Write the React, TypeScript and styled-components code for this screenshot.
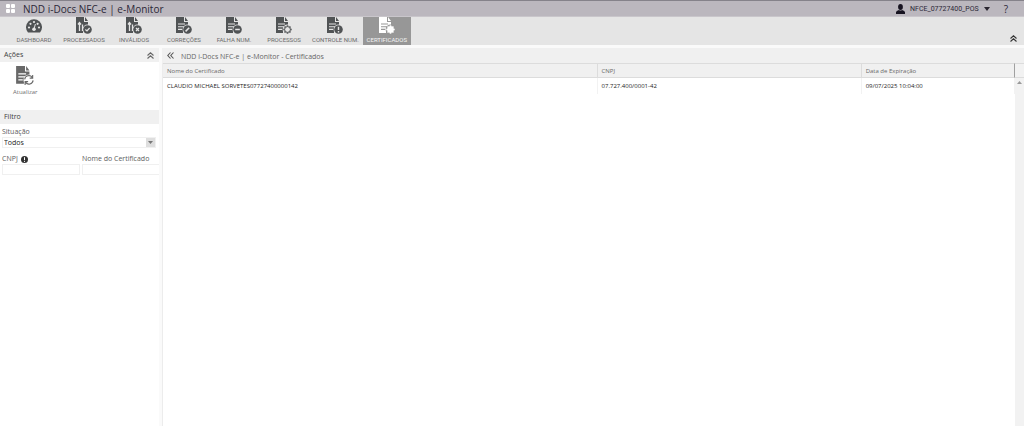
import React from "react";
import styled, { createGlobalStyle } from "styled-components";

const GlobalStyle = createGlobalStyle`
  * { box-sizing: border-box; }
  html, body, #root { height: 100%; }
  body { margin: 0; overflow: hidden; background: #fff; color: #3c3c3c; font: 7px/10px "Open Sans", "Noto Sans", sans-serif; }
  button, input, select { font: inherit; color: inherit; border-radius: 0; }
  button { border: 0; padding: 0; background: none; display: block; }
  svg { display: block; }
`;

const Page = styled.div`
  min-height: 100%;
  display: flex;
  flex-direction: column;
`;

const TopBar = styled.header`
  height: 17px;
  display: flex;
  align-items: center;
  padding: 0 16px 0 6px;
  background: #bbb7be;
  border-top: 1px solid #85828a;
  border-bottom: 1px solid #c9c6cb;
  color: #2c2838;
`;

const Title = styled.h1`
  margin: 0 auto 0 8px;
  font-size: 10px;
  line-height: 14px;
  font-weight: 400;
`;

const UserMenu = styled.button`
  display: flex;
  align-items: center;
  gap: 5px;
  margin-right: 14px;
  font-family: Roboto, "Open Sans", sans-serif;
`;

const Help = styled.button`
  font-size: 10px;
  line-height: 12px;
`;

const Ribbon = styled.nav`
  height: 28px;
  display: flex;
  gap: 2px;
  padding: 0 7px 0 10px;
  background: #e5e5e5;
`;

const NavItem = styled.button<{ $active?: boolean }>`
  min-width: 48px;
  padding: 0 2px;
  display: flex;
  flex-direction: column;
  align-items: center;
  font-family: Roboto, "Open Sans", sans-serif;
  font-size: 6px;
  line-height: 10px;
  color: ${(p) => (p.$active ? "#f4f4f4" : "#6c6c6c")};
  background: ${(p) => (p.$active ? "#979797" : "transparent")};
`;

const NavLabel = styled.span`
  white-space: nowrap;
`;

const Collapse = styled.button`
  margin: auto 0 3px auto;
`;

const Body = styled.main`
  flex: 1;
  display: flex;
  gap: 3px;
  padding-top: 3px;
  background: #fafafa;
`;

const Sidebar = styled.aside`
  width: 159px;
  flex: none;
  overflow: hidden;
  background: #fff;
`;

const PanelHeader = styled.div`
  height: 14px;
  display: flex;
  align-items: center;
  justify-content: space-between;
  padding: 0 5px 0 4px;
  background: #f0f0f0;
`;

const PanelTitle = styled.h2`
  margin: 0;
  font-size: 7px;
  line-height: 10px;
  font-weight: 400;
`;

const Actions = styled.div`
  height: 48px;
  padding: 4px 0 0 13px;
  color: #707070;
`;

const ActionButton = styled.button`
  display: flex;
  flex-direction: column;
  align-items: center;
  gap: 1px;
  font-size: 6px;
`;

const Filters = styled.form`
  padding: 3px 0 0 2px;
  color: #5c5c5c;
`;

const FieldRow = styled.div`
  display: flex;
  gap: 2px;
  margin-top: 6px;
`;

const Field = styled.div`
  flex: none;
  width: 78px;
`;

const Label = styled.label`
  display: flex;
  align-items: center;
  gap: 3px;
  height: 10px;
`;

const TextInput = styled.input`
  display: block;
  width: 100%;
  height: 11px;
  padding: 0 2px;
  border: 1px solid #f0f0f0;
  background: #fff;
`;

const SelectBox = styled.div`
  display: grid;
  grid-template-columns: 1fr 9px;
  align-items: center;
  height: 11px;
  margin-right: 3px;
  border: 1px solid #f0f0f0;
`;

const Select = styled.select`
  grid-area: 1 / 1 / 2 / 3;
  appearance: none;
  border: 0;
  height: 9px;
  padding: 0 10px 0 1px;
  line-height: 9px;
  background: transparent;
  color: #222;
`;

const SelectArrow = styled.span`
  grid-area: 1 / 2;
  height: 9px;
  display: grid;
  place-items: center;
  background: #dedede;
  pointer-events: none;
`;

const Content = styled.section`
  flex: 1;
  min-width: 0;
  display: flex;
  flex-direction: column;
  background: #fff;
`;

const ContentHeader = styled.div`
  height: 15px;
  display: flex;
  align-items: center;
  gap: 7px;
  padding: 0 5px;
  background: #f0f0f0;
  color: #666;
`;

const ContentTitle = styled(PanelTitle)`
  padding-top: 3px;
`;

const GridArea = styled.div`
  flex: 1;
  display: flex;
  border-left: 1px solid #ececec;
`;

const TableWrap = styled.div`
  flex: 1;
`;

const Table = styled.table`
  width: 100%;
  table-layout: fixed;
  border-collapse: separate;
  border-spacing: 0;
`;

const HeadCell = styled.th<{ $width: string }>`
  width: ${(p) => p.$width};
  height: 15px;
  padding: 0 4px;
  text-align: left;
  font-size: 6px;
  font-weight: 400;
  color: #686868;
  background: #f0f0f0;
  border: solid #dcdcdc;
  border-width: 1px 1px 1px 0;
  &:last-child { border-right-color: #a0a0a0; }
`;

const Cell = styled.td`
  height: 16px;
  padding: 0 4px;
  font-size: 6px;
  color: #1c1c1c;
  border-right: 1px solid #f2f2f2;
`;

const ScrollTrack = styled.div`
  width: 9px;
  background: #f2f2f2;
`;

const ScrollHead = styled.div`
  height: 15px;
  margin-bottom: 3px;
  border: solid #dcdcdc;
  border-width: 1px 0;
`;

const ScrollUp = styled.button`
  margin: 0 auto;
`;

const DOC = "M0 0H8V5H12V10A5 5 0 0 0 7 16H0ZM9 0L12 4H9Z";

type BadgeKind = "check" | "cross" | "edit" | "minus" | "gear" | "alert" | "seal" | "sync";

function Gear({ fill, stroke }: { fill: string; stroke: string }) {
  return (
    <g>
      {[0, 45, 90, 135].map((a) => (
        <path key={a} d="M11.5 8.3V16.7" stroke={stroke} strokeWidth="1.6" transform={`rotate(${a} 11.5 12.5)`} />
      ))}
      <circle cx="11.5" cy="12.5" r="2.9" fill={fill} stroke={stroke} />
    </g>
  );
}

function DocIcon({ kind, color = "#505355", bg = "#e5e5e5", arrow = false, width = 16, height = 18 }: {
  kind: BadgeKind; color?: string; bg?: string; arrow?: boolean; width?: number; height?: number;
}) {
  const disc = kind === "check" || kind === "cross" || kind === "edit" || kind === "minus" || kind === "alert";
  return (
    <svg width={width} height={height} viewBox="0 0 16 18" fill="none" aria-hidden="true">
      <path d={DOC} fill={color} />
      {arrow ? (
        <path d="M2 7.5L3.5 5.5L5 7.5M3.5 6V14M6.5 7.5V14" stroke={bg} strokeWidth="1.3" />
      ) : (
        <path d="M2 7H9M2 9.7H8M2 12.4H6" stroke={bg} strokeWidth="1.1" />
      )}
      <circle cx="11.5" cy="12.5" r="4.9" fill={bg} />
      {disc && <circle cx="11.5" cy="12.5" r="4.3" fill={color} />}
      {kind === "check" && <path d="M9.4 12.5L11 14L13.6 11" stroke={bg} strokeWidth="1.2" />}
      {kind === "cross" && <path d="M10 11L13 14M13 11L10 14" stroke={bg} strokeWidth="1.2" />}
      {kind === "edit" && <path d="M9.6 14.4L13.2 10.8" stroke={bg} strokeWidth="1.5" />}
      {kind === "minus" && <path d="M9.2 12.5H13.8" stroke={bg} strokeWidth="1.5" />}
      {kind === "alert" && <path d="M11.5 9.8V13.1M11.5 14V15.4" stroke={bg} strokeWidth="1.4" />}
      {kind === "gear" && <Gear fill={bg} stroke={color} />}
      {kind === "seal" && <Gear fill={color} stroke={color} />}
      {kind === "sync" && (
        <path d="M7.7 12A3.8 3.8 0 0 1 14.5 10.2M14.9 8V10.9H12.2M15.3 13A3.8 3.8 0 0 1 8.5 14.8M8.1 17V14.1H10.8" stroke={color} />
      )}
    </svg>
  );
}

function GaugeIcon() {
  return (
    <svg width="16" height="18" viewBox="0 0 16 18" aria-hidden="true">
      <path d="M2 15.5A8 8 0 1 1 14 15.5Z" fill="#505355" />
      <g fill="#e5e5e5">
        <circle cx="3" cy="10.5" r="1.1" />
        <circle cx="4.5" cy="6.8" r="1.1" />
        <circle cx="8" cy="5" r="1.1" />
        <circle cx="11.6" cy="6.8" r="1.1" />
        <circle cx="13" cy="10.5" r="1.1" />
        <circle cx="8" cy="12.3" r="1.8" />
      </g>
      <path d="M8 12L9.4 7" stroke="#e5e5e5" />
    </svg>
  );
}

function Chevrons({ left = false, color = "#333" }: { left?: boolean; color?: string }) {
  return (
    <svg width="7" height="7" viewBox="0 0 7 7" fill="none" stroke={color} strokeWidth="1.1" aria-hidden="true">
      <path d={left ? "M3.5 .5L.8 3.5L3.5 6.5M6.5 .5L3.8 3.5L6.5 6.5" : "M.5 3.5L3.5 .8L6.5 3.5M.5 6.5L3.5 3.8L6.5 6.5"} />
    </svg>
  );
}

const navItems: { label: string; kind: BadgeKind; arrow?: boolean }[] = [
  { label: "PROCESSADOS", kind: "check", arrow: true },
  { label: "INVÁLIDOS", kind: "cross", arrow: true },
  { label: "CORREÇÕES", kind: "edit" },
  { label: "FALHA NUM.", kind: "minus" },
  { label: "PROCESSOS", kind: "gear" },
  { label: "CONTROLE NUM.", kind: "alert" },
];

export default function App() {
  return (
    <Page>
      <GlobalStyle />
      <TopBar>
        <svg width="9" height="9" viewBox="0 0 9 9" fill="#fff" aria-hidden="true">
          <rect width="4" height="4" rx="1" />
          <rect x="5" width="4" height="4" rx="1" />
          <rect y="5" width="4" height="4" rx="1" />
          <rect x="5" y="5" width="4" height="4" rx="1" />
        </svg>
        <Title>NDD i-Docs NFC-e | e-Monitor</Title>
        <UserMenu type="button">
          <svg width="9" height="10" viewBox="0 0 9 10" fill="#171321" aria-hidden="true">
            <ellipse cx="4.5" cy="3" rx="2.4" ry="3" />
            <path d="M0 10V8.2Q0 6.8 3 6Q4.5 7 6 6Q9 6.8 9 8.2V10Z" />
          </svg>
          NFCE_07727400_POS
          <svg width="6" height="4" viewBox="0 0 6 4" fill="#2a2630" aria-hidden="true">
            <path d="M0 0H6L3 4Z" />
          </svg>
        </UserMenu>
        <Help type="button" aria-label="Ajuda">?</Help>
      </TopBar>
      <Ribbon>
        <NavItem type="button">
          <GaugeIcon />
          <NavLabel>DASHBOARD</NavLabel>
        </NavItem>
        {navItems.map((n) => (
          <NavItem type="button" key={n.label}>
            <DocIcon kind={n.kind} arrow={n.arrow} />
            <NavLabel>{n.label}</NavLabel>
          </NavItem>
        ))}
        <NavItem type="button" $active aria-current="page">
          <DocIcon kind="seal" color="#fff" bg="#979797" />
          <NavLabel>CERTIFICADOS</NavLabel>
        </NavItem>
        <Collapse type="button" aria-label="Recolher menu">
          <Chevrons />
        </Collapse>
      </Ribbon>
      <Body>
        <Sidebar>
          <PanelHeader>
            <PanelTitle>Ações</PanelTitle>
            <button type="button" aria-label="Recolher ações">
              <Chevrons color="#666" />
            </button>
          </PanelHeader>
          <Actions>
            <ActionButton type="button">
              <DocIcon kind="sync" color="#686868" bg="#fff" width={18} height={20} />
              Atualizar
            </ActionButton>
          </Actions>
          <PanelHeader>
            <PanelTitle>Filtro</PanelTitle>
          </PanelHeader>
          <Filters>
            <Label htmlFor="situacao">Situação</Label>
            <SelectBox>
              <Select id="situacao" defaultValue="Todos">
                <option>Todos</option>
              </Select>
              <SelectArrow>
                <svg width="5" height="3" viewBox="0 0 5 3" fill="#777" aria-hidden="true">
                  <path d="M0 0H5L2.5 3Z" />
                </svg>
              </SelectArrow>
            </SelectBox>
            <FieldRow>
              <Field>
                <Label htmlFor="cnpj">
                  CNPJ
                  <svg width="7" height="7" viewBox="0 0 7 7" aria-hidden="true">
                    <circle cx="3.5" cy="3.5" r="3.5" fill="#333" />
                    <path d="M3.5 1.2V4M3.5 4.8V5.9" stroke="#fff" />
                  </svg>
                </Label>
                <TextInput id="cnpj" />
              </Field>
              <Field>
                <Label htmlFor="nome">Nome do Certificado</Label>
                <TextInput id="nome" />
              </Field>
            </FieldRow>
          </Filters>
        </Sidebar>
        <Content>
          <ContentHeader>
            <button type="button" aria-label="Recolher painel">
              <Chevrons left color="#555" />
            </button>
            <ContentTitle>NDD i-Docs NFC-e | e-Monitor - Certificados</ContentTitle>
          </ContentHeader>
          <GridArea>
            <TableWrap>
              <Table>
                <thead>
                  <tr>
                    <HeadCell $width="51%">Nome do Certificado</HeadCell>
                    <HeadCell $width="31%">CNPJ</HeadCell>
                    <HeadCell $width="18%">Data de Expiração</HeadCell>
                  </tr>
                </thead>
                <tbody>
                  <tr>
                    <Cell>CLAUDIO MICHAEL SORVETES07727400000142</Cell>
                    <Cell>07.727.400/0001-42</Cell>
                    <Cell>09/07/2025 10:04:00</Cell>
                  </tr>
                </tbody>
              </Table>
            </TableWrap>
            <ScrollTrack>
              <ScrollHead />
              <ScrollUp type="button" aria-label="Rolar para cima">
                <svg width="5" height="3" viewBox="0 0 5 3" fill="#999" aria-hidden="true">
                  <path d="M0 3H5L2.5 0Z" />
                </svg>
              </ScrollUp>
            </ScrollTrack>
          </GridArea>
        </Content>
      </Body>
    </Page>
  );
}
